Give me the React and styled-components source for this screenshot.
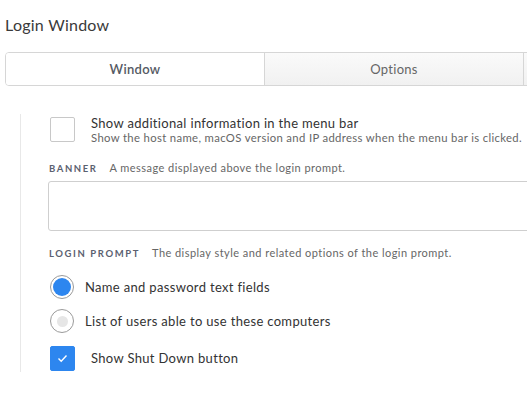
import styled, { createGlobalStyle } from "styled-components";

const GlobalStyle = createGlobalStyle`
  body {
    margin: 0;
    background: #fff;
    font-family: Lato, "Open Sans", sans-serif;
    color: #333;
  }
`;

const Page = styled.div`
  width: 527px;
  height: 399px;
  overflow: hidden;
  padding: 0 0 0 5px;
  box-sizing: border-box;
`;

const Title = styled.h1`
  margin: 0;
  padding-top: 15px;
  font-size: 16px;
  font-weight: 400;
  line-height: 20px;
  letter-spacing: 0.25px;
  color: #3a3a3a;
`;

const TabBar = styled.div`
  display: flex;
  margin-top: 17px;
  width: 800px;
  height: 34px;
  border: 1px solid #d6d6d6;
  border-radius: 4px;
  box-sizing: border-box;
  overflow: hidden;
`;

const Tab = styled.div`
  flex: 0 0 258px;
  display: flex;
  align-items: center;
  justify-content: center;
  font-size: 13px;
  letter-spacing: 0.3px;
  color: ${(p) => (p.$active ? "#555a64" : "#666")};
  font-weight: ${(p) => (p.$active ? 600 : 400)};
  background: ${(p) =>
    p.$active ? "#fff" : "linear-gradient(#fafafa, #f1f1f1)"};
  border-right: 1px solid #d6d6d6;
`;

const Panel = styled.div`
  margin: 28px 0 0 15px;
  border-left: 1px solid #e8e8e8;
  padding: 3px 0 1px 29px;
  width: 700px;
`;

const CheckRow = styled.div`
  display: flex;
  align-items: ${(p) => (p.$center ? "center" : "flex-start")};
  gap: 16px;
  margin-top: ${(p) => p.$mt || 0}px;
`;

const Box = styled.div`
  flex: 0 0 25px;
  height: 25px;
  box-sizing: border-box;
  border-radius: 2px;
  border: 1px solid ${(p) => (p.$checked ? "#2d86ef" : "#c8c8c8")};
  background: ${(p) => (p.$checked ? "#2d86ef" : "#fff")};
  display: flex;
  align-items: center;
  justify-content: center;
`;

const CheckText = styled.div`
  display: flex;
  flex-direction: column;
  margin-top: -1px;
`;

const Main = styled.span`
  font-size: 13px;
  line-height: 15px;
  letter-spacing: 0.33px;
  color: #333;
`;

const Sub = styled.span`
  font-size: 11.3px;
  line-height: 14px;
  letter-spacing: 0.35px;
  color: #666;
`;

const SectionHead = styled.div`
  display: flex;
  align-items: baseline;
  gap: 12px;
  margin-top: ${(p) => p.$mt}px;
  margin-left: -1px;
`;

const Label = styled.span`
  font-size: 9.5px;
  font-weight: 700;
  letter-spacing: 1.6px;
  color: #5b6170;
`;

const Desc = styled.span`
  font-size: 11px;
  letter-spacing: 0.45px;
  color: #666;
`;

const TextArea = styled.div`
  margin: 7px 0 0 -2px;
  height: 50px;
  border: 1px solid #cfcfcf;
  border-radius: 3px;
  box-sizing: border-box;
  background: #fff;
`;

const RadioRow = styled.div`
  display: flex;
  align-items: center;
  gap: 11px;
  margin-top: ${(p) => p.$mt}px;
`;

const Radio = styled.div`
  flex: 0 0 24px;
  height: 24px;
  box-sizing: border-box;
  border-radius: 50%;
  border: 1px solid #9a9a9a;
  display: flex;
  align-items: center;
  justify-content: center;
  &::after {
    content: "";
    width: ${(p) => (p.$on ? 18 : 11)}px;
    height: ${(p) => (p.$on ? 18 : 11)}px;
    border-radius: 50%;
    background: ${(p) => (p.$on ? "#2d86ef" : "#e6e6e6")};
  }
`;

export default function App() {
  return (
    <Page>
      <GlobalStyle />
      <Title>Login Window</Title>
      <TabBar>
        <Tab $active>Window</Tab>
        <Tab>Options</Tab>
        <Tab />
      </TabBar>
      <Panel>
        <CheckRow>
          <Box />
          <CheckText>
            <Main>Show additional information in the menu bar</Main>
            <Sub>
              Show the host name, macOS version and IP address when the menu
              bar is clicked.
            </Sub>
          </CheckText>
        </CheckRow>
        <SectionHead $mt={16}>
          <Label>BANNER</Label>
          <Desc>A message displayed above the login prompt.</Desc>
        </SectionHead>
        <TextArea />
        <SectionHead $mt={15}>
          <Label>LOGIN PROMPT</Label>
          <Desc>The display style and related options of the login prompt.</Desc>
        </SectionHead>
        <RadioRow $mt={16}>
          <Radio $on />
          <Main>Name and password text fields</Main>
        </RadioRow>
        <RadioRow $mt={10}>
          <Radio />
          <Main>List of users able to use these computers</Main>
        </RadioRow>
        <CheckRow $center $mt={13}>
          <Box $checked>
            <svg width="11" height="9" viewBox="0 0 11 9">
              <path
                d="M1.5 4.5 L4.2 7.2 L9.5 1.5"
                fill="none"
                stroke="#fff"
                strokeWidth="1.4"
              />
            </svg>
          </Box>
          <Main>Show Shut Down button</Main>
        </CheckRow>
      </Panel>
    </Page>
  );
}
